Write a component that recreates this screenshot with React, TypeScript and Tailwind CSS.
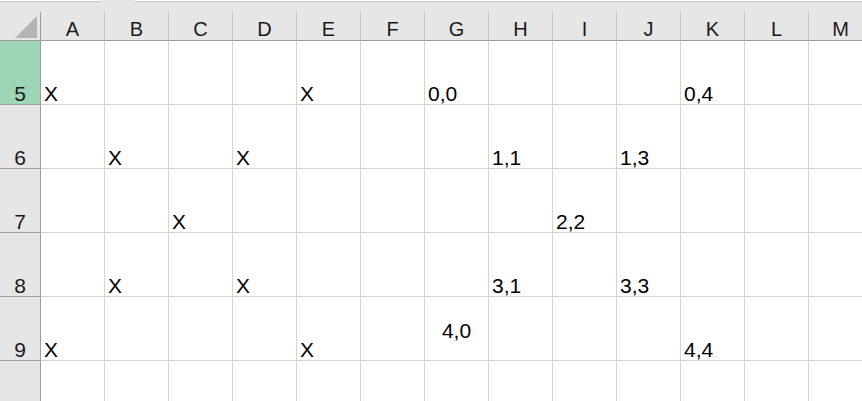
import React from 'react';

const cols = ['A', 'B', 'C', 'D', 'E', 'F', 'G', 'H', 'I', 'J', 'K', 'L', 'M'];

type Row = { label: string; selected?: boolean; cells: Record<number, string>; center?: number[] };

const rows: Row[] = [
    { label: '5', selected: true, cells: { 0: 'X', 4: 'X', 6: '0,0', 10: '0,4' } },
    { label: '6', cells: { 1: 'X', 3: 'X', 7: '1,1', 9: '1,3' } },
    { label: '7', cells: { 2: 'X', 8: '2,2' } },
    { label: '8', cells: { 1: 'X', 3: 'X', 7: '3,1', 9: '3,3' } },
    { label: '9', cells: { 0: 'X', 4: 'X', 6: '4,0', 10: '4,4' }, center: [6] },
];

const font = { fontFamily: '"Liberation Sans", Arial, sans-serif' };

export default function App() {
    return (
        <div className="w-[862px] h-[401px] overflow-hidden bg-white text-black" style={font}>
            {/* column header strip */}
            <div className="flex flex-col h-[41px] w-max">
                <div className="flex h-[2px]">
                    <div className="w-[101px] bg-white border-b border-[#c6c6c6]" />
                    <div className="w-[34px] bg-[#e6e6e6]" />
                    <div className="w-[800px] bg-white border-b border-[#c6c6c6]" />
                </div>
                <div className="flex h-[39px] bg-[#e6e6e6] border-b border-[#9e9e9e]">
                    {/* corner */}
                    <div className="w-[41px] h-full flex flex-col">
                        <div className="h-[10px]" />
                        <div className="flex-1 border-r border-[#9e9e9e] flex items-end justify-end pr-[3px] pb-[2px]">
                            <svg width="22" height="22" viewBox="0 0 22 22">
                                <polygon points="22,0 22,22 0,22" fill="#b4b4b4" />
                            </svg>
                        </div>
                    </div>
                    {cols.map((c) => (
                        <div key={c} className="w-[64px] h-full flex flex-col shrink-0">
                            <div className="h-[10px]" />
                            <div className="flex-1 border-r border-[#c6c6c6] flex items-end justify-center pb-[1px] text-[20px] leading-none text-[#1a1a1a]">
                                {c}
                            </div>
                        </div>
                    ))}
                </div>
            </div>

            {/* body rows */}
            {rows.map((r) => (
                <div key={r.label} className="flex h-[64px] w-max">
                    <div
                        className={
                            'w-[41px] h-full border-r border-b border-[#9e9e9e] flex items-end justify-center text-[21px] leading-none text-[#1a1a1a] ' +
                            (r.selected ? 'bg-[#9fd5b7]' : 'bg-[#e6e6e6]')
                        }
                    >
                        {r.label}
                    </div>
                    {cols.map((c, i) => {
                        const centered = r.center?.includes(i);
                        return (
                            <div
                                key={c}
                                className={
                                    'w-[64px] h-full shrink-0 border-r border-b border-[#d4d4d4] flex text-[21px] leading-none whitespace-nowrap ' +
                                    (centered ? 'items-center justify-center pt-[3px]' : 'items-end pl-[3px]')
                                }
                            >
                                {r.cells[i] ?? ''}
                            </div>
                        );
                    })}
                </div>
            ))}

            {/* trailing empty row */}
            <div className="flex h-[64px] w-max">
                <div className="w-[41px] h-full border-r border-[#9e9e9e] bg-[#e6e6e6]" />
                {cols.map((c) => (
                    <div key={c} className="w-[64px] h-full shrink-0 border-r border-[#d4d4d4]" />
                ))}
            </div>
        </div>
    );
}
